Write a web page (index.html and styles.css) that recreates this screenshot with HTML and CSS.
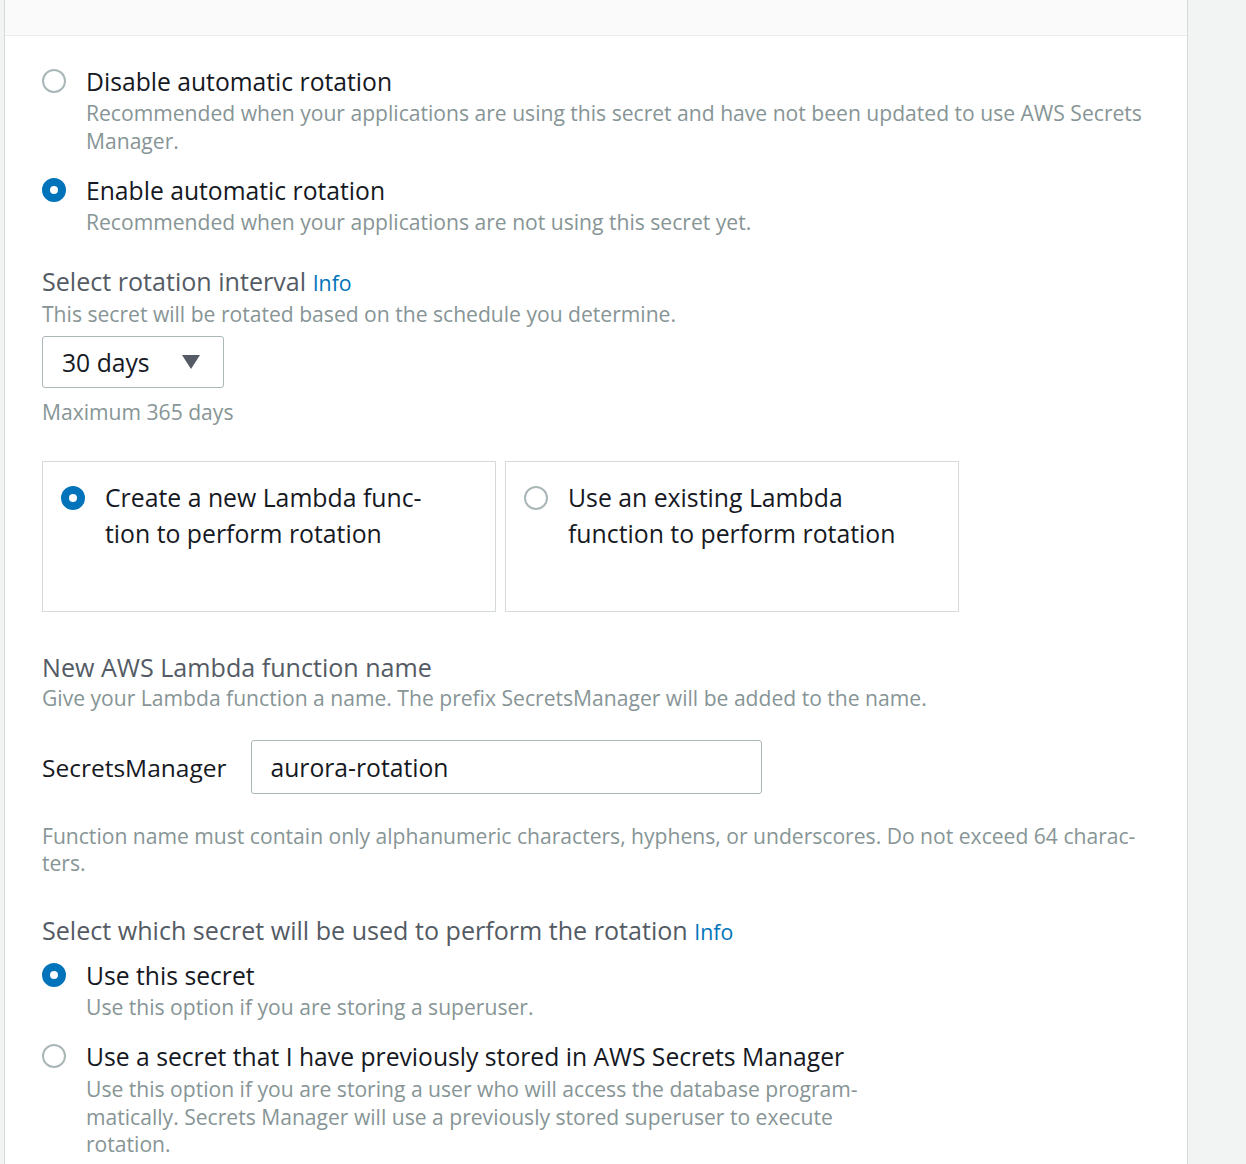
FILE: index.html
```html
<!DOCTYPE html>
<html lang="en">
<head>
<meta charset="utf-8">
<title>Rotation configuration</title>
<link rel="stylesheet" href="styles.css">
</head>
<body>
<div class="page">
  <div class="panel">
    <div class="panel-head"></div>
    <div class="panel-body">
      <div class="radio-group">
        <div class="radio-item">
          <span class="radio"></span>
          <div class="radio-text">
            <div class="label">Disable automatic rotation</div>
            <div class="desc">Recommended when your applications are using this secret and have not been updated to use AWS Secrets<br>Manager.</div>
          </div>
        </div>
        <div class="radio-item">
          <span class="radio checked"></span>
          <div class="radio-text">
            <div class="label">Enable automatic rotation</div>
            <div class="desc">Recommended when your applications are not using this secret yet.</div>
          </div>
        </div>
      </div>

      <div class="field interval">
        <div class="heading">Select rotation interval <a class="info">Info</a></div>
        <div class="desc">This secret will be rotated based on the schedule you determine.</div>
        <div class="select">
          <span>30 days</span>
          <svg class="caret" width="18" height="14" viewBox="0 0 18 14"><path d="M0 0H18L9 14Z" fill="#545b64"/></svg>
        </div>
        <div class="desc hint">Maximum 365 days</div>
      </div>

      <div class="tiles">
        <div class="tile">
          <span class="radio checked"></span>
          <div class="tile-text">Create a new Lambda func-<br>tion to perform rotation</div>
        </div>
        <div class="tile">
          <span class="radio"></span>
          <div class="tile-text">Use an existing Lambda<br>function to perform rotation</div>
        </div>
      </div>

      <div class="field lambda">
        <div class="heading">New AWS Lambda function name</div>
        <div class="desc">Give your Lambda function a name. The prefix SecretsManager will be added to the name.</div>
        <div class="name-row">
          <span class="prefix">SecretsManager</span>
          <div class="input">aurora-rotation</div>
        </div>
        <div class="desc constraint">Function name must contain only alphanumeric characters, hyphens, or underscores. Do not exceed 64 charac-<br>ters.</div>
      </div>

      <div class="field which">
        <div class="heading">Select which secret will be used to perform the rotation <a class="info">Info</a></div>
        <div class="radio-group tight">
          <div class="radio-item">
            <span class="radio checked"></span>
            <div class="radio-text">
              <div class="label">Use this secret</div>
              <div class="desc">Use this option if you are storing a superuser.</div>
            </div>
          </div>
          <div class="radio-item">
            <span class="radio"></span>
            <div class="radio-text">
              <div class="label">Use a secret that I have previously stored in AWS Secrets Manager</div>
              <div class="desc multi">Use this option if you are storing a user who will access the database program-<br>matically. Secrets Manager will use a previously stored superuser to execute<br>rotation.</div>
            </div>
          </div>
        </div>
      </div>
    </div>
  </div>
</div>
</body>
</html>
```

FILE: styles.css
```css
html, body {
  margin: 0;
  padding: 0;
  background: #f2f3f3;
  font-family: "Open Sans", Lato, sans-serif;
  color: #16191f;
}

.page {
  padding-left: 4px;
}

.panel {
  width: 1182px;
  min-height: 1164px;
  background: #ffffff;
  border-left: 1px solid #d5dbdb;
  border-right: 1px solid #d5dbdb;
}

.panel-head {
  height: 35px;
  background: #fafafa;
  border-bottom: 1px solid #eaeded;
}

.panel-body {
  padding: 30px 37px 0 37px;
}

.radio-group {
  display: flex;
  flex-direction: column;
  gap: 20px;
}

.radio-group.tight {
  margin-top: 12px;
  gap: 20px;
}

.radio-item {
  display: flex;
  gap: 20px;
  align-items: flex-start;
}

.radio {
  flex: none;
  box-sizing: border-box;
  width: 24px;
  height: 24px;
  margin-top: 3px;
  border-radius: 50%;
  border: 2px solid #aab7b8;
  background: #fff;
}

.radio.checked {
  border: 8px solid #0073bb;
}

.label {
  font-size: 24.7px;
  line-height: 32px;
  color: #16191f;
}

.desc {
  font-size: 21.1px;
  line-height: 28px;
  color: #879596;
}

.label + .desc,
.heading + .desc {
  margin-top: 1px;
}

.heading {
  font-size: 25.1px;
  line-height: 32px;
  color: #545b64;
}

.info {
  font-size: 21.3px;
  color: #0073bb;
}

.interval {
  margin-top: 29px;
}

.select {
  box-sizing: border-box;
  width: 182px;
  height: 52px;
  margin-top: 8px;
  border: 1px solid #aab7b8;
  border-radius: 3px;
  display: flex;
  align-items: center;
  justify-content: space-between;
  padding: 0 23px 0 19px;
  font-size: 24.7px;
  color: #16191f;
}

.hint {
  margin-top: 10px;
}

.tiles {
  display: flex;
  gap: 9px;
  margin-top: 35px;
}

.tile {
  box-sizing: border-box;
  width: 454px;
  height: 151px;
  border: 1px solid #d5dbdb;
  display: flex;
  gap: 20px;
  padding: 17px 18px;
  align-items: flex-start;
}

.tile .radio {
  margin-top: 7px;
}

.tile-text {
  font-size: 24.8px;
  line-height: 36px;
  color: #16191f;
}

.lambda {
  margin-top: 39px;
}

.name-row {
  display: flex;
  align-items: center;
  gap: 25px;
  margin-top: 28px;
}

.prefix {
  font-size: 24.5px;
  color: #16191f;
}

.input {
  box-sizing: border-box;
  width: 511px;
  height: 54px;
  border: 1px solid #aab7b8;
  border-radius: 3px;
  display: flex;
  align-items: center;
  padding-left: 18px;
  font-size: 24.7px;
  color: #16191f;
}

.label + .desc.multi {
  line-height: 27.5px;
  margin-top: 2px;
}

.constraint {
  margin-top: 28px;
  line-height: 27px;
}

.which {
  margin-top: 38px;
}
```
